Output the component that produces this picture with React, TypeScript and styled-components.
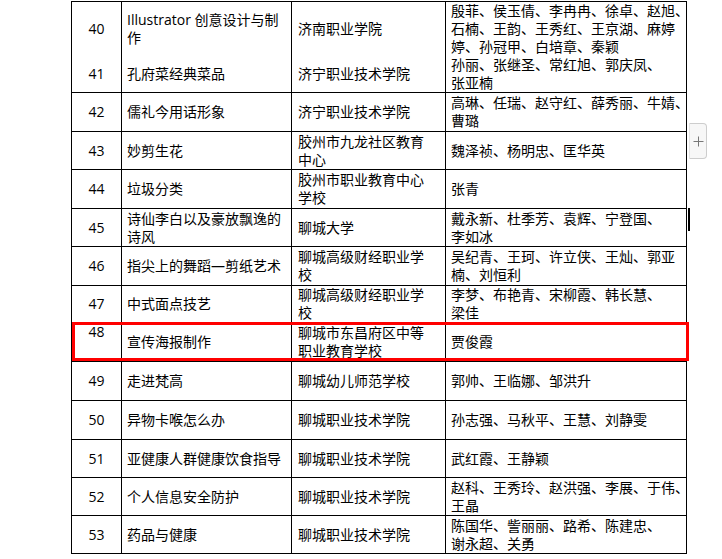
import React from "react";
import styled, { createGlobalStyle } from "styled-components";

const GlobalStyle = createGlobalStyle`
  html, body {
    margin: 0;
    padding: 0;
    background: #ffffff;
  }
  body {
    font-family: "Open Sans", "Noto Sans CJK SC", sans-serif;
    color: #000;
  }
`;

const Page = styled.div`
  position: relative;
  width: 722px;
  height: 559px;
  overflow: hidden;
  background: #ffffff;
`;

const Table = styled.div`
  display: flex;
  flex-direction: column;
  gap: 1px;
  width: 616px;
  box-sizing: border-box;
  margin: 1px 0 0 71px;
  padding: 1px;
  background: #000;
`;

const Row = styled.div<{ $h: number }>`
  display: grid;
  grid-template-columns: 49px 169px 153px 240px;
  column-gap: 1px;
  height: ${(p) => p.$h}px;
`;

const Cell = styled.div<{ $pad: number; $center?: boolean; $top?: boolean }>`
  background: #fff;
  display: flex;
  flex-direction: column;
  justify-content: ${(p) => (p.$top ? "flex-start" : "center")};
  align-items: ${(p) => (p.$center ? "center" : "flex-start")};
  padding-left: ${(p) => p.$pad}px;
  font-size: 14px;
  line-height: 18px;
  white-space: nowrap;
  min-width: 0;
`;

const Line = styled.span`
  display: block;
`;

const Highlight = styled.div`
  position: absolute;
  left: 72px;
  top: 322px;
  width: 617px;
  height: 39px;
  box-sizing: border-box;
  border: 3px solid #ff0000;
  pointer-events: none;
`;

const AddTab = styled.div`
  position: absolute;
  left: 689px;
  top: 123px;
  width: 18px;
  height: 36px;
  box-sizing: border-box;
  border: 1px solid #cdcdcd;
  border-left-color: #e4e4e4;
  border-radius: 0 4px 4px 0;
  background: #f7f7f7;
  display: flex;
  align-items: center;
  justify-content: center;
`;

const Caret = styled.div`
  position: absolute;
  left: 688px;
  top: 208px;
  width: 2px;
  height: 23px;
  background: #000;
`;

type Entry = {
  no: string;
  h: number;
  title: string[];
  school: string[];
  people: string[];
  numTop?: boolean;
};

const rows: Entry[] = [
  {
    no: "40",
    h: 52,
    title: ["Illustrator 创意设计与制", "作"],
    school: ["济南职业学院"],
    people: ["殷菲、侯玉倩、李冉冉、徐卓、赵旭、", "石楠、王韵、王秀红、王京湖、麻婷", "婷、孙冠甲、白培章、秦颖"],
  },
  { no: "41", h: 37, title: ["孔府菜经典菜品"], school: ["济宁职业技术学院"], people: ["孙丽、张继圣、常红旭、郭庆凤、", "张亚楠"] },
  { no: "42", h: 38, title: ["儒礼今用话形象"], school: ["济宁职业技术学院"], people: ["高琳、任瑞、赵守红、薛秀丽、牛婧、", "曹璐"] },
  { no: "43", h: 37, title: ["妙剪生花"], school: ["胶州市九龙社区教育", "中心"], people: ["魏泽祯、杨明忠、匡华英"] },
  { no: "44", h: 38, title: ["垃圾分类"], school: ["胶州市职业教育中心", "学校"], people: ["张青"] },
  { no: "45", h: 37, title: ["诗仙李白以及豪放飘逸的", "诗风"], school: ["聊城大学"], people: ["戴永新、杜季芳、袁辉、宁登国、", "李如冰"] },
  { no: "46", h: 38, title: ["指尖上的舞蹈—剪纸艺术"], school: ["聊城高级财经职业学", "校"], people: ["吴纪青、王珂、许立侠、王灿、郭亚", "楠、刘恒利"] },
  { no: "47", h: 36, title: ["中式面点技艺"], school: ["聊城高级财经职业学", "校"], people: ["李梦、布艳青、宋柳霞、韩长慧、", "梁佳"] },
  { no: "48", h: 38, numTop: true, title: ["宣传海报制作"], school: ["聊城市东昌府区中等", "职业教育学校"], people: ["贾俊霞"] },
  { no: "49", h: 38, title: ["走进梵高"], school: ["聊城幼儿师范学校"], people: ["郭帅、王临娜、邹洪升"] },
  { no: "50", h: 38, title: ["异物卡喉怎么办"], school: ["聊城职业技术学院"], people: ["孙志强、马秋平、王慧、刘静雯"] },
  { no: "51", h: 37, title: ["亚健康人群健康饮食指导"], school: ["聊城职业技术学院"], people: ["武红霞、王静颖"] },
  { no: "52", h: 37, title: ["个人信息安全防护"], school: ["聊城职业技术学院"], people: ["赵科、王秀玲、赵洪强、李展、于伟、", "王晶"] },
  { no: "53", h: 37, title: ["药品与健康"], school: ["聊城职业技术学院"], people: ["陈国华、訾丽丽、路希、陈建忠、", "谢永超、关勇"] },
];

const Lines = ({ items }: { items: string[] }) => (
  <>
    {items.map((t, i) => (
      <Line key={i}>{t}</Line>
    ))}
  </>
);

export default function App() {
  return (
    <Page>
      <GlobalStyle />
      <Table>
        {rows.map((r) => (
          <Row key={r.no} $h={r.h}>
            <Cell $pad={0} $center $top={r.numTop}>
              <Line>{r.no}</Line>
            </Cell>
            <Cell $pad={5}>
              <Lines items={r.title} />
            </Cell>
            <Cell $pad={6}>
              <Lines items={r.school} />
            </Cell>
            <Cell $pad={5}>
              <Lines items={r.people} />
            </Cell>
          </Row>
        ))}
      </Table>
      <Highlight />
      <AddTab>
        <svg width="11" height="11" viewBox="0 0 11 11">
          <path d="M5.5 0.5v10M0.5 5.5h10" stroke="#777" strokeWidth="1" fill="none" />
        </svg>
      </AddTab>
      <Caret />
    </Page>
  );
}
